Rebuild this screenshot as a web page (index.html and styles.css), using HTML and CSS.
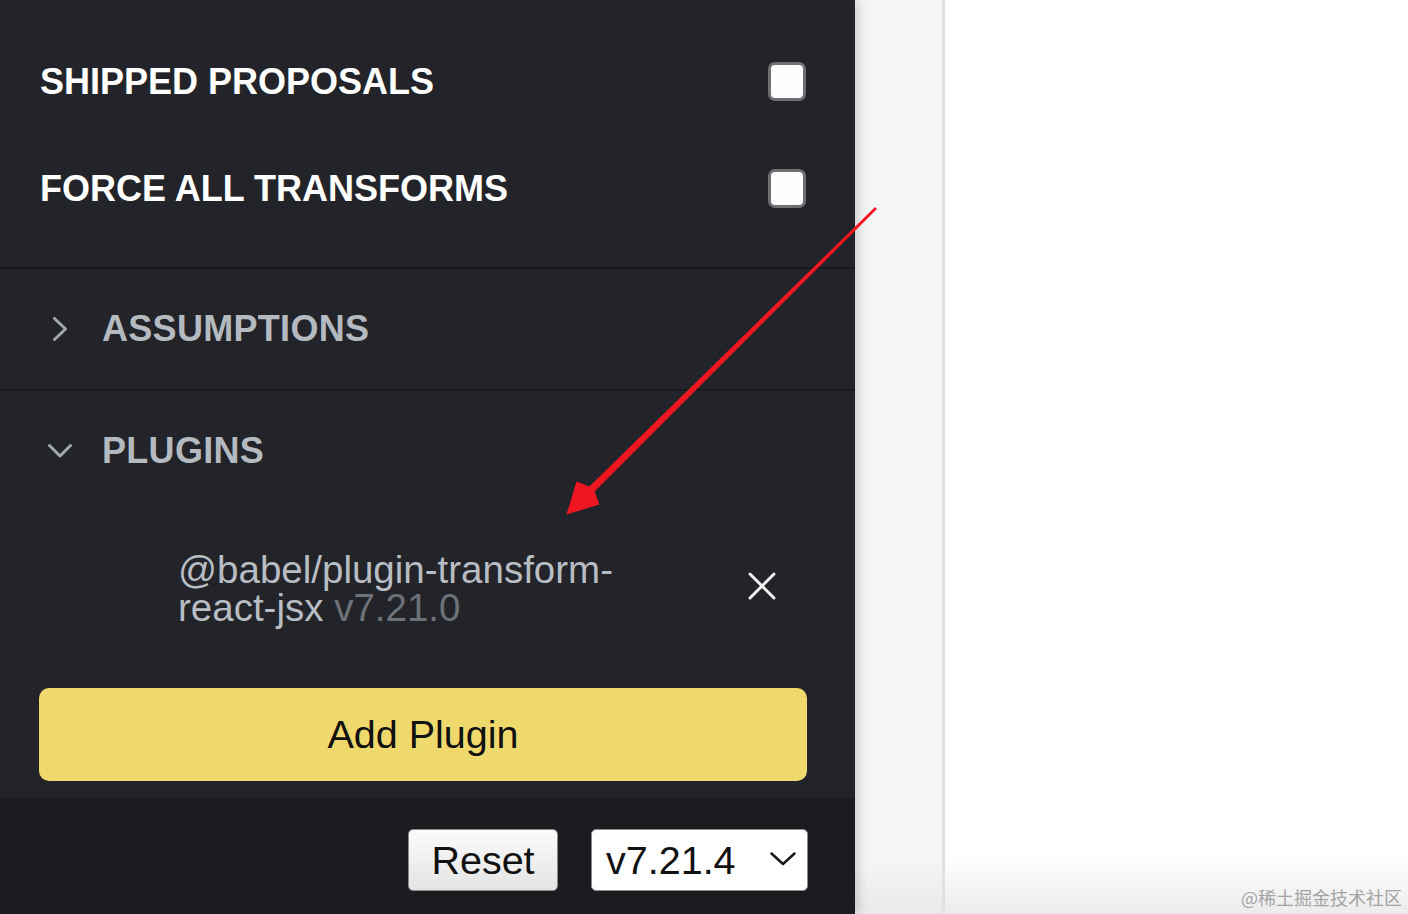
FILE: index.html
```html
<!DOCTYPE html>
<html lang="en">
<head>
<meta charset="utf-8">
<title>Babel REPL settings</title>
<link rel="stylesheet" href="styles.css">
</head>
<body>
<div class="app">
  <aside class="sidebar">
    <div class="settings">
      <label class="row">
        <span class="row-label">SHIPPED PROPOSALS</span>
        <span class="check"></span>
      </label>
      <label class="row">
        <span class="row-label">FORCE ALL TRANSFORMS</span>
        <span class="check"></span>
      </label>
    </div>

    <div class="section collapsed">
      <div class="section-head">
        <svg class="chev" viewBox="0 0 24 24"><polyline points="6.5,1.5 17.5,12 6.5,22.5"/></svg>
        <span class="section-title">ASSUMPTIONS</span>
      </div>
    </div>

    <div class="section plugins">
      <div class="section-head">
        <svg class="chev" viewBox="0 0 24 24"><polyline points="1.5,6.5 12,17 22.5,6.5"/></svg>
        <span class="section-title">PLUGINS</span>
      </div>
      <div class="plugin-item">
        <span class="plugin-name">@babel/plugin-transform-react-jsx <span class="plugin-version">v7.21.0</span></span>
        <svg class="remove" viewBox="0 0 28 28"><path d="M2 2 L26 26 M26 2 L2 26"/></svg>
      </div>
      <button class="add-plugin">Add Plugin</button>
    </div>

    <div class="footer">
      <button class="reset">Reset</button>
      <div class="version-select">
        <span>v7.21.4</span>
        <svg class="select-chev" viewBox="0 0 26 14"><polyline points="1.5,1.5 13,12 24.5,1.5"/></svg>
      </div>
    </div>
  </aside>
  <div class="gutter"></div>
  <main class="preview">
    <span class="watermark">@稀土掘金技术社区</span>
  </main>
</div>
<svg class="annotation" viewBox="0 0 1408 914" aria-hidden="true">
  <polygon points="876.9,209 594.6,491.6 599.5,504.5 566.5,514.5 576.5,481.4 589.4,486.4 875.1,207"/>
</svg>
</body>
</html>
```
FILE: styles.css
```css
* { box-sizing: border-box; }

html, body {
  margin: 0;
  padding: 0;
  width: 1408px;
  height: 914px;
  overflow: hidden;
}

body {
  font-family: "Liberation Sans", Arial, sans-serif;
  background: #ffffff;
}

.app {
  display: flex;
  height: 914px;
}

/* ---------- sidebar ---------- */
.sidebar {
  position: relative;
  z-index: 1;
  width: 855px;
  flex: 0 0 855px;
  display: flex;
  flex-direction: column;
  background: #222429;
  box-shadow: 3px 0 10px rgba(0, 0, 0, 0.18);
}

.settings {
  padding: 28px 49px 25px 40px;
  border-bottom: 2px solid #18191c;
}

.row {
  height: 107px;
  display: flex;
  align-items: center;
  justify-content: space-between;
}

.row-label {
  font-size: 36px;
  font-weight: 700;
  color: #ffffff;
}

.check {
  width: 38px;
  height: 39px;
  background: #fcfcfc;
  border: 3px solid #6e6f72;
  border-radius: 7px;
}

.section.collapsed {
  height: 122px;
  border-bottom: 2px solid #18191c;
}

.section-head {
  height: 120px;
  display: flex;
  align-items: center;
  padding-left: 48px;
}

.chev {
  width: 24px;
  height: 24px;
  fill: none;
  stroke: #a2a6ad;
  stroke-width: 3;
  stroke-linecap: round;
  stroke-linejoin: round;
}

.section-title {
  margin-left: 30px;
  font-size: 36px;
  font-weight: 700;
  letter-spacing: 0.3px;
  color: #b5b9c0;
}

.plugins {
  flex: 1;
  display: flex;
  flex-direction: column;
}

.plugin-item {
  display: flex;
  align-items: center;
  justify-content: space-between;
  padding: 40px 79px 0 178px;
}

.plugin-name {
  width: 460px;
  font-size: 38.5px;
  line-height: 38px;
  color: #b8bcc3;
}

.plugin-version {
  color: #6d7178;
}

.remove {
  width: 28px;
  height: 28px;
  margin-top: -6px;
  fill: none;
  stroke: #f2f2f2;
  stroke-width: 3;
  stroke-linecap: round;
}

.add-plugin {
  margin: auto 48px 17px 39px;
  height: 93px;
  border: none;
  border-radius: 10px;
  background: #f0d96c;
  color: #111111;
  font-family: "Liberation Sans", Arial, sans-serif;
  font-size: 39.5px;
  padding: 0;
}

/* ---------- footer ---------- */
.footer {
  height: 116px;
  flex: 0 0 116px;
  background: #1a1c20;
  display: flex;
  justify-content: flex-end;
  align-items: flex-start;
  gap: 33px;
  padding: 31px 47px 0 0;
}

.reset {
  width: 150px;
  height: 62px;
  padding: 0;
  border: 1px solid #8a8a8a;
  border-radius: 5px;
  background: linear-gradient(#fbfbfb, #e4e4e4);
  color: #111111;
  font-family: "Liberation Sans", Arial, sans-serif;
  font-size: 39.5px;
}

.version-select {
  width: 217px;
  height: 62px;
  display: flex;
  align-items: center;
  justify-content: space-between;
  padding: 0 11px 0 14px;
  border: 1px solid #8a8a8a;
  border-radius: 5px;
  background: #ffffff;
  color: #111111;
  font-size: 39.5px;
}

.select-chev {
  width: 26px;
  height: 14px;
  margin-top: -2px;
  fill: none;
  stroke: #1a1a1a;
  stroke-width: 2.5;
  stroke-linecap: round;
  stroke-linejoin: round;
}

/* ---------- right area ---------- */
.gutter {
  flex: 0 0 87px;
  background: linear-gradient(#f4f5f6 0, #f4f5f6 860px, #e9e9ea 914px);
}

.preview {
  flex: 1;
  display: flex;
  align-items: flex-end;
  justify-content: flex-end;
  padding: 0 6px 7px 0;
  border-left: 3px solid #e1e1e1;
  background: linear-gradient(#ffffff 0, #ffffff 855px, #ececec 914px);
}

.watermark {
  font-family: "Noto Sans CJK SC", "Liberation Serif", serif;
  font-size: 18px;
  line-height: 20px;
  color: #a4a4a4;
}

/* ---------- annotation overlay ---------- */
.annotation {
  position: absolute;
  left: 0;
  top: 0;
  width: 1408px;
  height: 914px;
  z-index: 5;
  pointer-events: none;
  fill: #ee1620;
}
```
